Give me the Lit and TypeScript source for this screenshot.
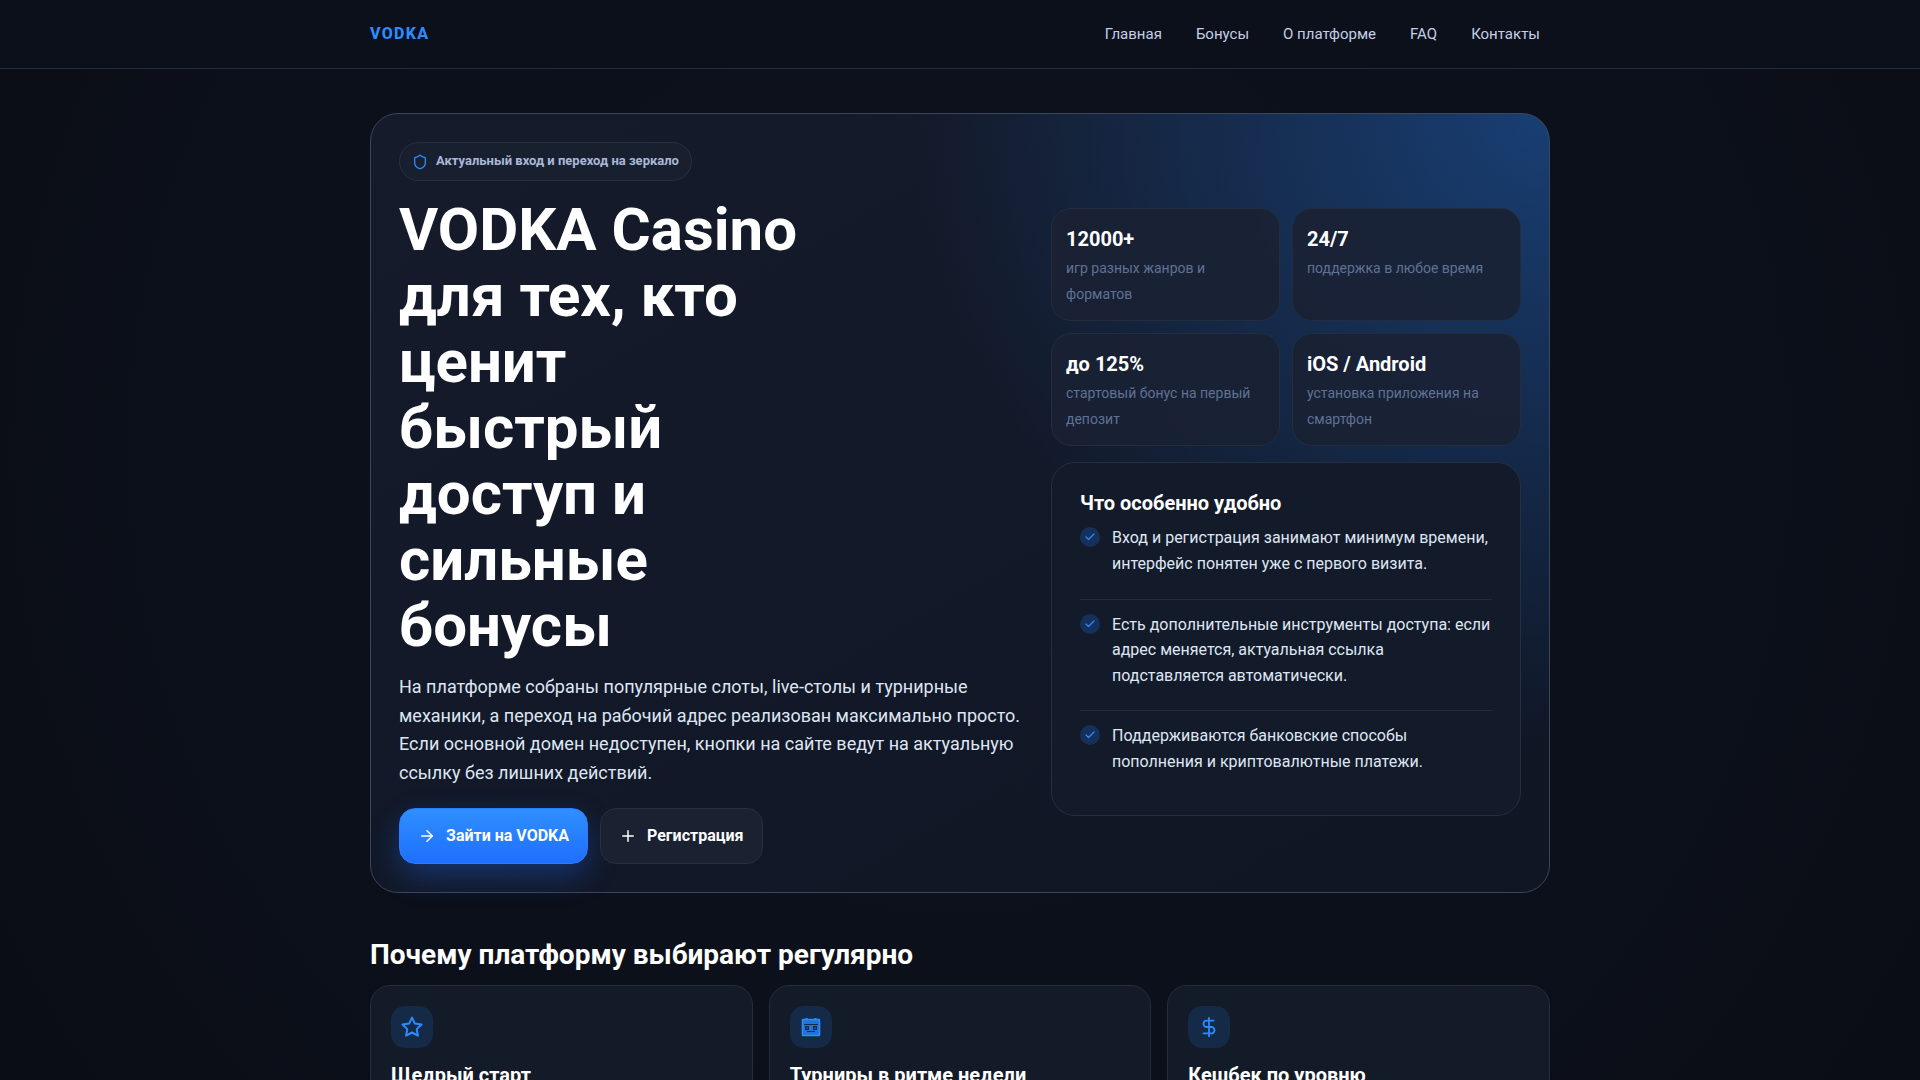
import { LitElement, html, css, svg } from 'lit';
import { customElement } from 'lit/decorators.js';

const icon = (body: unknown, size = 24, width = 2) => html`<svg
  xmlns="http://www.w3.org/2000/svg"
  width=${size}
  height=${size}
  viewBox="0 0 24 24"
  fill="none"
  stroke="currentColor"
  stroke-width=${width}
  stroke-linecap="round"
  stroke-linejoin="round"
>${body}</svg>`;

const shield = svg`<path d="M20 13c0 5-3.5 7.5-7.66 8.95a1 1 0 0 1-.67-.01C7.5 20.5 4 18 4 13V6a1 1 0 0 1 1-1c2 0 4.5-1.2 6.24-2.72a1.17 1.17 0 0 1 1.52 0C14.51 3.81 17 5 19 5a1 1 0 0 1 1 1z"/>`;
const arrow = svg`<path d="M5 12h14"/><path d="m12 5 7 7-7 7"/>`;
const plus = svg`<path d="M5 12h14"/><path d="M12 5v14"/>`;
const check = svg`<path d="M20 6 9 17l-5-5"/>`;
const star = svg`<path d="M12 2.6l2.9 6 6.6.9-4.8 4.6 1.2 6.6-5.9-3.2-5.9 3.2 1.2-6.6L2.5 9.5l6.6-.9z"/>`;
// calendar glyph: filled sheet with two date cells and a dark rule under them
const calendar = svg`
  <path d="M7.5 3v2M16.5 3v2" stroke-linecap="butt"/>
  <rect x="3.5" y="4.5" width="17" height="16" rx="0.5" fill="rgba(42,140,255,0.75)" stroke-width="1.6"/>
  <path d="M5 9.5h14" stroke="#14294a" stroke-width="1" stroke-linecap="butt"/>
  <rect x="6" y="11" width="4" height="4" fill="#14294a" stroke="none"/>
  <rect x="14" y="11" width="4" height="4" fill="#14294a" stroke="none"/>
  <rect x="7.4" y="12.4" width="1.2" height="1.2" fill="#2a8cff" stroke="none"/>
  <rect x="15.4" y="12.4" width="1.2" height="1.2" fill="#2a8cff" stroke="none"/>
  <path d="M8 16.5h8" stroke="#14294a" stroke-width="1" stroke-linecap="butt"/>`;
const dollar = svg`<path d="M12 2v20"/><path d="M17 5H9.5a3.5 3.5 0 0 0 0 7h5a3.5 3.5 0 0 1 0 7H6"/>`;

const navLinks = ['Главная', 'Бонусы', 'О платформе', 'FAQ', 'Контакты'];

const stats = [
  { value: '12000+', label: 'игр разных жанров и форматов' },
  { value: '24/7', label: 'поддержка в любое время' },
  { value: 'до 125%', label: 'стартовый бонус на первый депозит' },
  { value: 'iOS / Android', label: 'установка приложения на смартфон' },
];

const perks = [
  'Вход и регистрация занимают минимум времени, интерфейс понятен уже с первого визита.',
  'Есть дополнительные инструменты доступа: если адрес меняется, актуальная ссылка подставляется автоматически.',
  'Поддерживаются банковские способы пополнения и криптовалютные платежи.',
];

const features = [
  { icon: star, size: 24, title: 'Щедрый старт' },
  { icon: calendar, size: 24, title: 'Турниры в ритме недели' },
  { icon: dollar, size: 22, title: 'Кешбек по уровню' },
];

@customElement('app-root')
export class AppRoot extends LitElement {
  static styles = css`
    :host {
      display: block;
      min-height: 1080px;
      font-family: Roboto, 'Liberation Sans', sans-serif;
      color: #fff;
      background:
        radial-gradient(circle at 50% 40%, #0d121d 0%, #0c101a 60%, #0a0d16 100%);
    }
    * {
      box-sizing: border-box;
    }
    .topbar {
      height: 69px;
      border-bottom: 1px solid #1f2d44;
      background: #0c101a;
    }
    .topbar-inner {
      width: 1180px;
      height: 68px;
      margin: 0 auto;
      display: flex;
      align-items: center;
      justify-content: space-between;
    }
    .logo {
      padding-bottom: 2px;
      color: #2a8cff;
      font-size: 16px;
      font-weight: 800;
      letter-spacing: 1.3px;
    }
    nav {
      display: flex;
      gap: 14px;
    }
    nav a {
      padding: 8px 10px;
      color: #c4cfe6;
      font-size: 15px;
    }
    main {
      width: 1180px;
      margin: 0 auto;
      padding-top: 44px;
    }
    .hero {
      display: grid;
      grid-template-columns: 628px 470px;
      gap: 24px;
      padding: 28px;
      border: 1px solid #3a465c;
      border-radius: 28px;
      background:
        radial-gradient(circle at 100% 0%, rgba(30, 100, 190, 0.5) 0%, rgba(30, 100, 190, 0) 45%),
        linear-gradient(150deg, #151b2b 0%, #0f1624 100%);
    }
    .badge {
      display: inline-flex;
      align-items: center;
      gap: 8px;
      height: 39px;
      padding: 0 12px 2px;
      border: 1px solid #27303f;
      border-radius: 20px;
      background: #18202f;
      color: #a9b8d8;
      font-size: 13px;
      font-weight: 700;
      vertical-align: top;
    }
    .badge svg {
      margin-top: 2px;
      color: #2a8cff;
    }
    h1 {
      max-width: 440px;
      margin: 16px 0 0;
      font-size: 60px;
      font-weight: 700;
      line-height: 66px;
    }
    .lead {
      margin: 13.8px 0 0;
      color: #dfe6f3;
      font-size: 18px;
      line-height: 28.8px;
    }
    .actions {
      display: flex;
      gap: 12px;
      margin-top: 20px;
    }
    .btn {
      display: flex;
      align-items: center;
      gap: 10px;
      height: 56px;
      padding: 0 19px 1px 18px;
      border: 1px solid #27303f;
      border-radius: 16px;
      background: #1a2232;
      font-size: 16px;
      font-weight: 700;
    }
    .btn svg {
      margin-top: 1px;
    }
    .btn.primary {
      padding-right: 18px;
      border-color: #2a7bff;
      background: linear-gradient(180deg, #2f8fff 0%, #1f6fff 100%);
      box-shadow: 0 12px 30px rgba(30, 110, 255, 0.32);
    }
    .side {
      display: flex;
      flex-direction: column;
      gap: 16px;
      margin-top: 66px;
    }
    .stats {
      display: grid;
      grid-template-columns: 1fr 1fr;
      gap: 12px;
    }
    .stat {
      height: 113px;
      padding: 15px 14px 0;
      border: 1px solid #232d3e;
      border-radius: 20px;
      background: rgba(25, 33, 51, 0.9);
    }
    .stat b {
      display: block;
      font-size: 20px;
      font-weight: 700;
      line-height: 31px;
    }
    .stat span {
      display: block;
      color: #5f7196;
      font-size: 14px;
      line-height: 26px;
    }
    .panel {
      height: 354px;
      padding: 28px;
      border: 1px solid #252f40;
      border-radius: 24px;
      background: #131a29;
    }
    .panel h2 {
      margin: 0;
      font-size: 20px;
      font-weight: 700;
      line-height: 24px;
    }
    .perk {
      display: flex;
      gap: 12px;
      padding: 12px 0 22px;
      border-bottom: 1px solid #242d3d;
      color: #dfe6f3;
      font-size: 16px;
      line-height: 25.6px;
    }
    .perk:first-of-type {
      padding: 10px 0 22.8px;
    }
    .perk:nth-of-type(2) {
      padding-top: 11.6px;
    }
    .perk:last-child {
      padding-bottom: 13px;
      border-bottom: none;
    }
    .tick {
      flex: none;
      display: flex;
      align-items: center;
      justify-content: center;
      width: 20px;
      height: 20px;
      margin-top: 2px;
      border-radius: 50%;
      background: #15305a;
      color: #2a8cff;
    }
    .section-title {
      margin: 44px 0 0;
      font-size: 28px;
      font-weight: 700;
      line-height: 36px;
    }
    .features {
      display: grid;
      grid-template-columns: repeat(3, 1fr);
      gap: 16px;
      margin-top: 12px;
    }
    .feature {
      height: 140px;
      padding: 20px;
      border: 1px solid #232d3e;
      border-radius: 20px;
      background: #131a28;
    }
    .feature-icon {
      display: flex;
      align-items: center;
      justify-content: center;
      width: 42px;
      height: 42px;
      border-radius: 14px;
      background: #152a47;
      color: #2a8cff;
    }
    .feature h3 {
      margin: 13px 0 0;
      font-size: 20px;
      font-weight: 700;
      line-height: 28px;
    }
  `;

  render() {
    return html`
      <header class="topbar">
        <div class="topbar-inner">
          <div class="logo">VODKA</div>
          <nav>${navLinks.map((link) => html`<a>${link}</a>`)}</nav>
        </div>
      </header>
      <main>
        <section class="hero">
          <div>
            <div class="badge">${icon(shield, 16)}Актуальный вход и переход на зеркало</div>
            <h1>VODKA Casino для тех, кто ценит быстрый доступ и сильные бонусы</h1>
            <p class="lead">
              На платформе собраны популярные слоты, live-столы и турнирные механики, а переход на рабочий адрес
              реализован максимально просто. Если основной домен недоступен, кнопки на сайте ведут на актуальную
              ссылку без лишних действий.
            </p>
            <div class="actions">
              <div class="btn primary">${icon(arrow, 18)}Зайти на VODKA</div>
              <div class="btn">${icon(plus, 18)}Регистрация</div>
            </div>
          </div>
          <div class="side">
            <div class="stats">
              ${stats.map((s) => html`<div class="stat"><b>${s.value}</b><span>${s.label}</span></div>`)}
            </div>
            <div class="panel">
              <h2>Что особенно удобно</h2>
              ${perks.map((p) => html`<div class="perk"><div class="tick">${icon(check, 12, 2.4)}</div><div>${p}</div></div>`)}
            </div>
          </div>
        </section>
        <h2 class="section-title">Почему платформу выбирают регулярно</h2>
        <section class="features">
          ${features.map(
            (f) => html`<div class="feature"><div class="feature-icon">${icon(f.icon, f.size)}</div><h3>${f.title}</h3></div>`,
          )}
        </section>
      </main>
    `;
  }
}
